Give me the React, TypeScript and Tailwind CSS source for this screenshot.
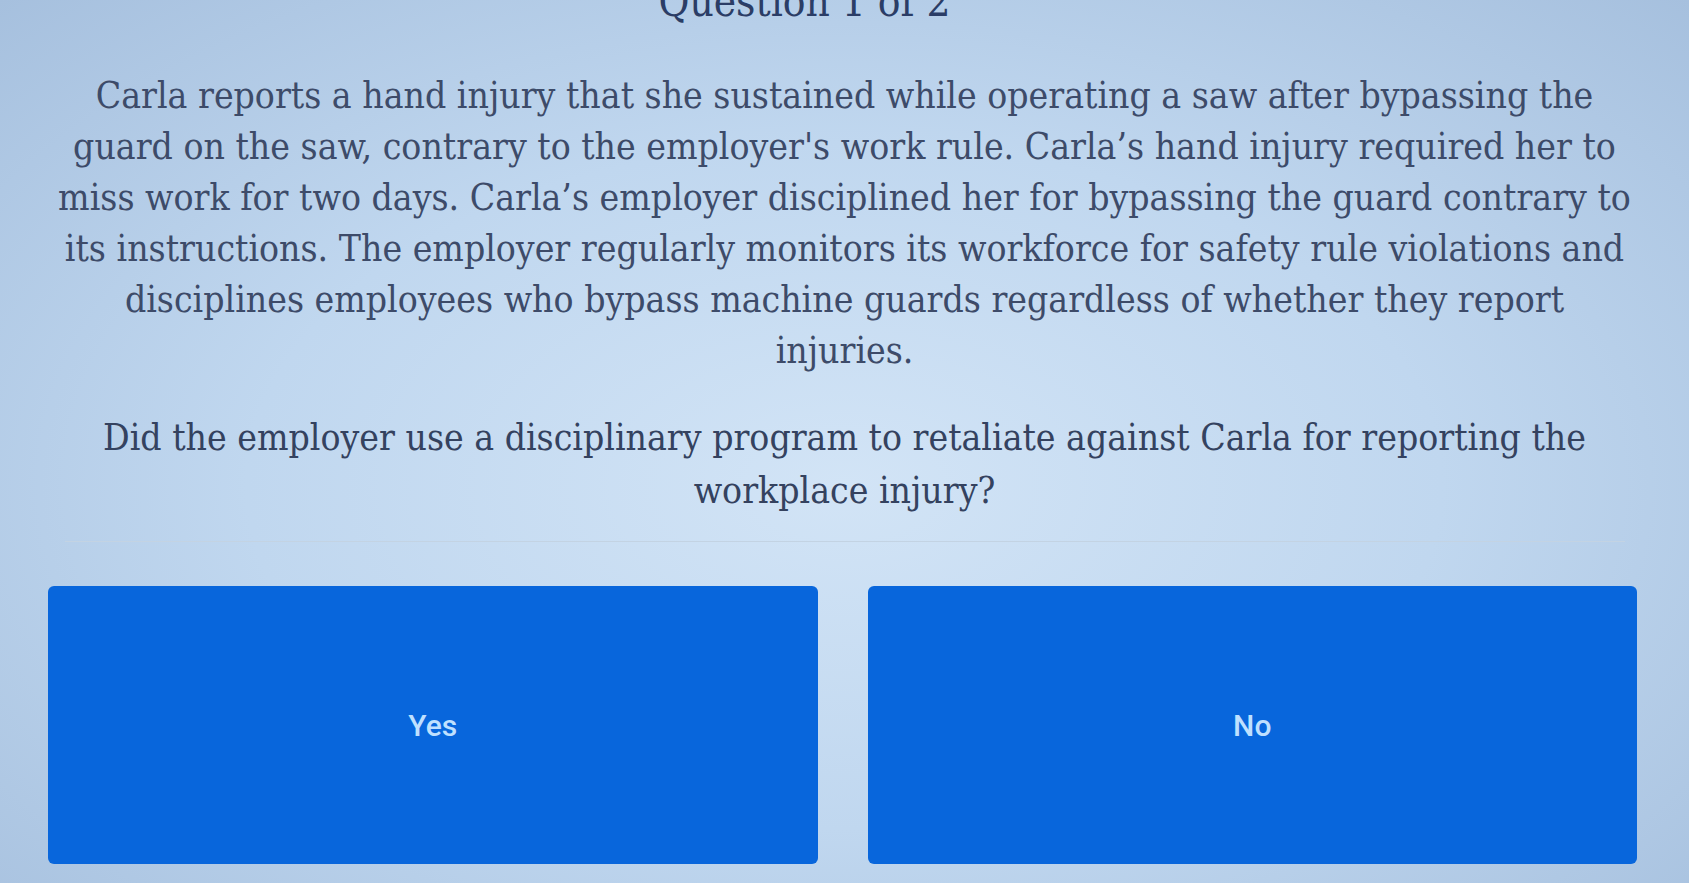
import React from 'react';

const slab = { fontFamily: '"DejaVu Serif Condensed", "DejaVu Serif", serif', fontStretch: 'condensed' as const };

const passage = [
  'Carla reports a hand injury that she sustained while operating a saw after bypassing the',
  'guard on the saw, contrary to the employer\'s work rule. Carla’s hand injury required her to',
  'miss work for two days. Carla’s employer disciplined her for bypassing the guard contrary to',
  'its instructions. The employer regularly monitors its workforce for safety rule violations and',
  'disciplines employees who bypass machine guards regardless of whether they report',
  'injuries.',
];

const prompt = [
  'Did the employer use a disciplinary program to retaliate against Carla for reporting the',
  'workplace injury?',
];

function AnswerButton({ label }: { label: string }) {
  return (
    <button
      className="flex-1 h-[278px] rounded-md bg-[#0866dc] text-[#bfe0ff] text-[30px] font-medium flex items-center justify-center"
      style={{ fontFamily: 'Roboto, "Liberation Sans", sans-serif' }}
    >
      {label}
    </button>
  );
}

export default function App() {
  return (
    <div className="w-[1689px] h-[883px] overflow-hidden bg-[radial-gradient(ellipse_at_50%_55%,#d2e4f6_0%,#c0d7ef_50%,#a6c0de_100%)] flex flex-col items-center">
      <div className="mt-[-19px] pr-[80px] text-[42px] text-[#2b3d66] leading-none" style={slab}>
        Question 1 of 2
      </div>

      <p className="mt-[47px] text-center text-[37px] leading-[51px] text-[#3d4b69] whitespace-nowrap" style={slab}>
        {passage.map((line) => (
          <span key={line} className="block">{line}</span>
        ))}
      </p>

      <p className="mt-[35px] text-center text-[37px] leading-[53px] text-[#34425f] whitespace-nowrap" style={slab}>
        {prompt.map((line) => (
          <span key={line} className="block">{line}</span>
        ))}
      </p>

      <div className="w-[1560px] mt-[24px] border-t border-[#c3d3e3]" />

      <div className="w-full pl-[48px] pr-[52px] mt-[44px] flex gap-[50px]">
        <AnswerButton label="Yes" />
        <AnswerButton label="No" />
      </div>
    </div>
  );
}
